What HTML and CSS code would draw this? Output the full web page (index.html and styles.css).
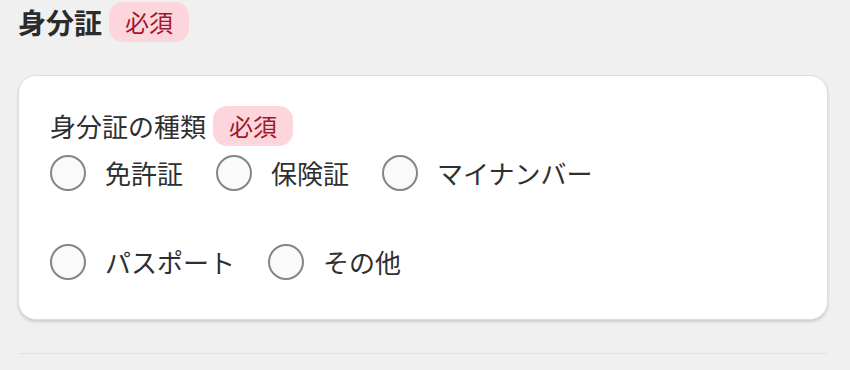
FILE: index.html
```html
<!DOCTYPE html>
<html lang="ja">
<head>
<meta charset="utf-8">
<link rel="stylesheet" href="styles.css">
</head>
<body>
<div class="page">
  <div class="heading">
    <span class="heading-text">身分証</span>
    <span class="badge">必須</span>
  </div>
  <div class="card">
    <div class="label-row">
      <span class="label-text">身分証の種類</span>
      <span class="badge">必須</span>
    </div>
    <div class="radios">
      <label class="radio"><span class="circle"></span><span class="radio-text">免許証</span></label>
      <label class="radio"><span class="circle"></span><span class="radio-text">保険証</span></label>
      <label class="radio"><span class="circle"></span><span class="radio-text">マイナンバー</span></label>
      <label class="radio"><span class="circle"></span><span class="radio-text">パスポート</span></label>
      <label class="radio"><span class="circle"></span><span class="radio-text">その他</span></label>
    </div>
  </div>
  <div class="divider"></div>
</div>
</body>
</html>
```

FILE: styles.css
```css
* { box-sizing: border-box; }
html, body {
  margin: 0;
  padding: 0;
  background: #f0f0f0;
  font-family: "Noto Sans CJK JP", "Noto Sans", sans-serif;
  color: #333;
}
.page {
  width: 850px;
  padding: 2px 22px 0 18px;
}
.heading {
  display: flex;
  align-items: center;
  gap: 7px;
  height: 40px;
}
.heading-text {
  font-size: 28px;
  font-weight: 700;
  line-height: 40px;
  color: #2b2b2b;
}
.badge {
  display: inline-flex;
  align-items: center;
  justify-content: center;
  height: 40px;
  padding: 0 16px;
  border-radius: 14px;
  background: #fdd6dd;
  color: #a01830;
  font-size: 24px;
  line-height: 40px;
}
.card {
  margin-top: 33px;
  background: #fff;
  border: 1px solid #dcdcdc;
  border-radius: 18px;
  box-shadow: 0 2px 3px rgba(0, 0, 0, 0.14);
  padding: 30px 31px 39px 31px;
}
.label-row {
  display: flex;
  align-items: center;
  gap: 7px;
  height: 40px;
}
.label-text {
  font-size: 26px;
  line-height: 40px;
  color: #2f2f2f;
}
.radios {
  margin-top: 9px;
  display: flex;
  flex-wrap: wrap;
  column-gap: 33px;
  row-gap: 53px;
}
.radio {
  display: flex;
  align-items: center;
  gap: 19px;
  height: 36px;
}
.circle {
  width: 36px;
  height: 36px;
  border-radius: 50%;
  border: 2px solid #858585;
  background: #fafafa;
  flex: none;
}
.radio-text {
  font-size: 26px;
  line-height: 36px;
  color: #2f2f2f;
}
.divider {
  margin-top: 33px;
  height: 1px;
  background: #e2e2e2;
}
```
